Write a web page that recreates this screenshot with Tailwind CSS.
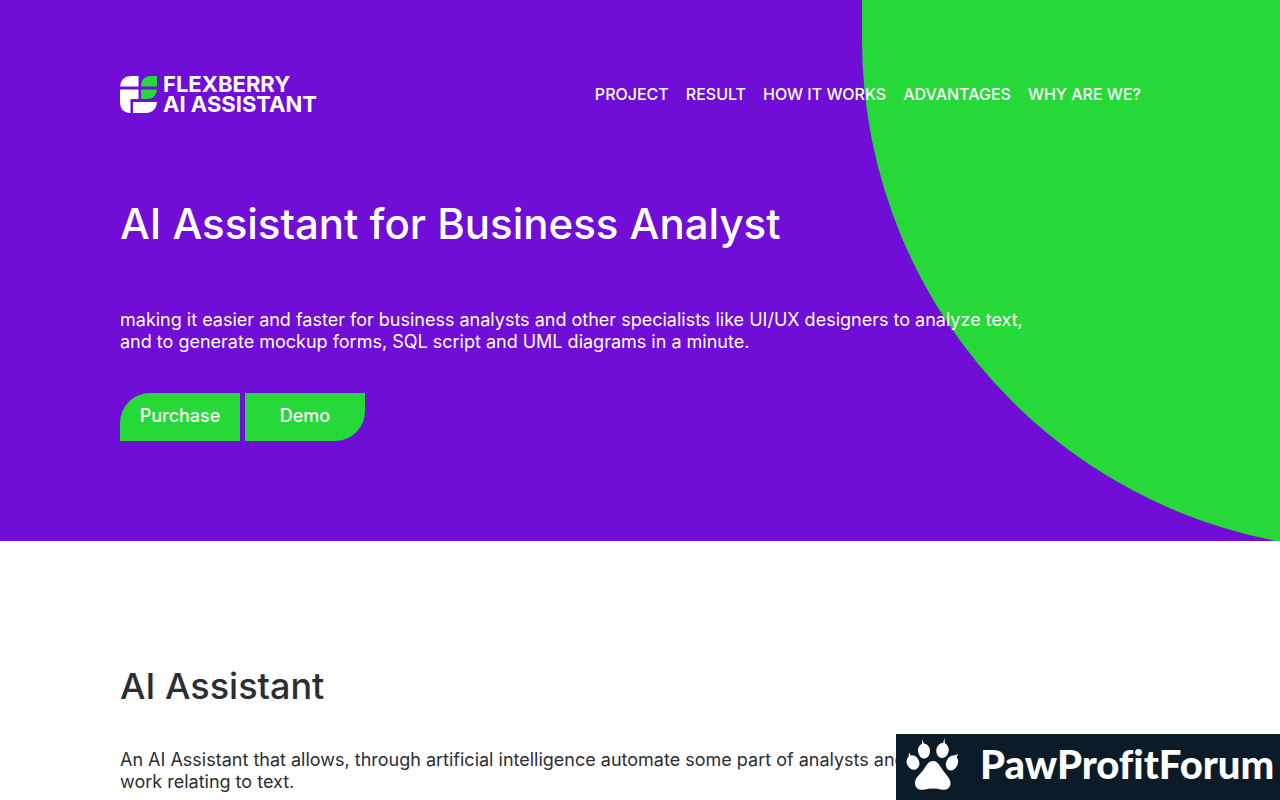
<!DOCTYPE html>
<html lang="en">

<head>
  <meta charset="UTF-8" />
  <meta name="viewport" content="width=device-width, initial-scale=1.0" />
  <title>Flexberry AI Assistant</title>
  <script src="https://cdn.jsdelivr.net/npm/@tailwindcss/browser@4"></script>
</head>

<body class="bg-white text-[#2b2e33] font-['Inter',sans-serif] overflow-x-hidden">
  <!-- Hero -->
  <div class="relative overflow-hidden bg-[#700dd7] text-white px-[120px] pt-[74px] pb-[100px]">
    <div class="absolute top-0 left-[862px] h-[550px] w-[1020px] rounded-b-[510px] bg-[#26d938]"></div>

    <header class="relative flex items-center justify-between pr-[19px]">
      <a href="#" class="flex items-center gap-[6px]">
        <svg class="size-[37px]" viewBox="0 0 37 37" aria-hidden="true">
          <path fill="#fff" d="M0 10.500A10.500 10.500 0 0 1 10.500 0H18.500V10.500Z" />
          <path fill="#26d938" d="M21 10.500C21 4 25 0 31 0H37V10.500Z" />
          <path fill="#fff" d="M0 13.500H18.500V23H10.500V37C4 37 0 33 0 26Z" />
          <path fill="#26d938" d="M21 13.500H37C36.500 20 32 23 27 23H21Z" />
          <path fill="#fff" d="M13 26H37C36.500 33 32 37 26 37H13Z" />
        </svg>
        <span class="text-[22px] leading-5 font-bold">FLEXBERRY<br />AI ASSISTANT</span>
      </a>
      <nav class="flex gap-[17px] text-base font-medium">
        <a href="#project">PROJECT</a>
        <a href="#result">RESULT</a>
        <a href="#how">HOW IT WORKS</a>
        <a href="#advantages">ADVANTAGES</a>
        <a href="#why">WHY ARE WE?</a>
      </nav>
    </header>

    <div class="relative">
      <h1 class="mt-[84px] text-[42px] leading-[52px] font-medium">AI Assistant for Business Analyst</h1>
      <p class="mt-[59px] max-w-[920px] text-lg leading-[22px]">making it easier and faster for business analysts and other specialists like UI/UX designers to analyze text, and to generate mockup forms, SQL script and UML diagrams in a minute.</p>
      <div class="mt-10 flex gap-[5px] text-lg font-medium">
        <button class="h-12 w-[120px] rounded-tl-[30px] bg-[#26d938] pb-[2px]">Purchase</button>
        <button class="h-12 w-[120px] rounded-br-[30px] bg-[#26d938] pb-[2px]">Demo</button>
      </div>
    </div>
  </div>

  <!-- About -->
  <main id="project" class="px-[120px] pt-[120px]">
    <h2 class="text-4xl leading-[50px] font-medium">AI Assistant</h2>
    <p class="mt-[38px] max-w-[920px] text-lg leading-[22px]">An AI Assistant that allows, through artificial intelligence automate some part of analysts and their<br />work relating to text.</p>
  </main>

  <!-- Partner badge -->
  <a href="#" class="fixed right-0 bottom-0 flex h-[66px] w-96 items-center bg-[#0b1b28] pb-[6px] pl-[10px] text-white">
    <svg class="h-[54px] w-[54px] shrink-0" viewBox="0 0 54 54" fill="#fff" aria-hidden="true">
      <ellipse cx="7" cy="25.500" rx="6.200" ry="7.500" transform="rotate(-22 7 25.500)" />
      <ellipse cx="18" cy="14" rx="6" ry="7.500" transform="rotate(-5 18 14)" />
      <ellipse cx="36.500" cy="13.500" rx="6.200" ry="7.500" transform="rotate(10 36.500 13.500)" />
      <ellipse cx="46" cy="26" rx="5.800" ry="7.700" transform="rotate(24 46 26)" />
      <path d="M2.500 22L3 15L5 20ZM15.500 9L16.500 2L18 8ZM36.500 8L38.500 1L39 8ZM47 19L52 17L50 22Z" />
      <path d="M27 24C31 24 33 27 36 32C39 37 45 41 44.500 47C44 52 39 53.500 35 52.500C30 51.200 24 51.200 19 52.500C14 53.500 9 52 9 46C9 40 15 37 18 32C21 27 23 24 27 24Z" />
    </svg>
    <span class="ml-[20px] text-[40px] leading-[50px] font-black font-['Lato',sans-serif] [font-variant-ligatures:none]">PawProfitForum</span>
  </a>
</body>

</html>
